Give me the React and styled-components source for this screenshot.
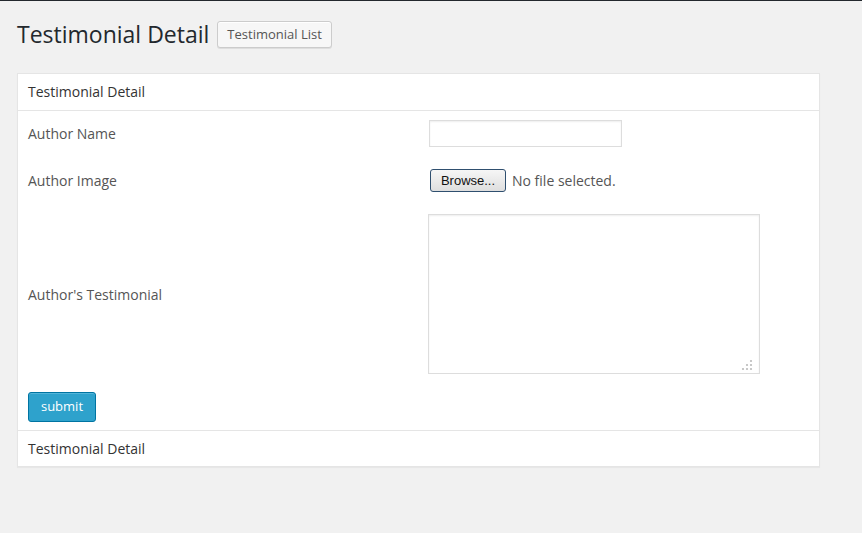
import React from "react";
import styled, { createGlobalStyle } from "styled-components";

const GlobalStyle = createGlobalStyle`
  body {
    margin: 0;
    background: #f1f1f1;
    border-top: 1px solid #23282d;
    font-family: "Open Sans", "Liberation Sans", sans-serif;
    color: #444;
  }
`;

const Page = styled.div`
  padding: 0 42px 60px 17px;
`;

const TitleBar = styled.div`
  display: flex;
  align-items: center;
  gap: 8px;
  padding-top: 19px;
  height: 28px;
`;

const Title = styled.h2`
  margin: 0;
  font-size: 23px;
  font-weight: 400;
  line-height: 29px;
  color: #23282d;
`;

const ListButton = styled.button`
  height: 27px;
  padding: 0 9px;
  font-family: "Open Sans", "Liberation Sans", sans-serif;
  font-size: 13px;
  color: #555;
  background: #f7f7f7;
  border: 1px solid #ccc;
  border-radius: 3px;
  box-shadow: inset 0 1px 0 #fff, 0 1px 0 rgba(0, 0, 0, 0.08);
`;

const Panel = styled.div`
  margin-top: 25px;
  background: #fff;
  border: 1px solid #e5e5e5;
  box-shadow: 0 1px 1px rgba(0, 0, 0, 0.04);
`;

const PanelBar = styled.div`
  box-sizing: border-box;
  height: ${(p) => (p.$bottom ? 36 : 37)}px;
  padding: 0 10px ${(p) => (p.$bottom ? 0 : 2)}px;
  display: flex;
  align-items: center;
  font-size: 14px;
  color: #333;
  border-${(p) => (p.$bottom ? "top" : "bottom")}: 1px solid #e5e5e5;
`;

const Body = styled.form`
  padding: 9px 10px 8px;
`;

const Row = styled.div`
  display: flex;
  align-items: center;
  margin-bottom: ${(p) => p.$gap}px;
`;

const Label = styled.label`
  width: 401px;
  flex-shrink: 0;
  font-size: 14px;
  color: #555;
`;

const TextInput = styled.input`
  box-sizing: border-box;
  width: 193px;
  height: 27px;
  border: 1px solid #ddd;
  box-shadow: inset 0 1px 2px rgba(0, 0, 0, 0.07);
  margin: 0;
`;

const FileField = styled.div`
  display: flex;
  align-items: center;
  gap: 6px;
  margin-left: 1px;
`;

const BrowseButton = styled.button`
  box-sizing: border-box;
  width: 76px;
  height: 23px;
  padding: 0;
  font-family: "Liberation Sans", Arial, sans-serif;
  font-size: 13px;
  color: #111;
  border: 1px solid #2f4f6f;
  border-radius: 3px;
  background: linear-gradient(#f6f6f6, #dedede);
`;

const FileNote = styled.span`
  font-size: 14px;
  color: #555;
  padding-bottom: 1px;
`;

const AreaWrap = styled.div`
  position: relative;
  width: 332px;
  height: 160px;
  margin-left: -1px;
`;

const Area = styled.textarea`
  box-sizing: border-box;
  width: 100%;
  height: 100%;
  margin: 0;
  border: 1px solid #ddd;
  box-shadow: inset 0 1px 2px rgba(0, 0, 0, 0.07);
  resize: none;
`;

const Grip = styled.svg`
  position: absolute;
  right: 7px;
  bottom: 3px;
`;

const SubmitButton = styled.button`
  box-sizing: border-box;
  width: 68px;
  height: 30px;
  padding: 0 0 2px;
  font-family: "Open Sans", "Liberation Sans", sans-serif;
  font-size: 13px;
  color: #fff;
  background: #2ea2cc;
  border: 1px solid #0074a2;
  border-radius: 3px;
  box-shadow: inset 0 1px 0 rgba(120, 200, 230, 0.5);
`;

export default function App() {
  return (
    <>
      <GlobalStyle />
      <Page>
        <TitleBar>
          <Title>Testimonial Detail</Title>
          <ListButton>Testimonial List</ListButton>
        </TitleBar>
        <Panel>
          <PanelBar>Testimonial Detail</PanelBar>
          <Body onSubmit={(e) => e.preventDefault()}>
            <Row $gap={22}>
              <Label>Author Name</Label>
              <TextInput type="text" />
            </Row>
            <Row $gap={22}>
              <Label>Author Image</Label>
              <FileField>
                <BrowseButton type="button">Browse...</BrowseButton>
                <FileNote>No file selected.</FileNote>
              </FileField>
            </Row>
            <Row $gap={18}>
              <Label>Author's Testimonial</Label>
              <AreaWrap>
                <Area />
                <Grip width="12" height="12" viewBox="0 0 12 12">
                  <g fill="#bbb">
                    <circle cx="10" cy="2" r="1.1" />
                    <circle cx="6" cy="6" r="1.1" />
                    <circle cx="10" cy="6" r="1.1" />
                    <circle cx="2" cy="10" r="1.1" />
                    <circle cx="6" cy="10" r="1.1" />
                    <circle cx="10" cy="10" r="1.1" />
                  </g>
                </Grip>
              </AreaWrap>
            </Row>
            <SubmitButton type="submit">submit</SubmitButton>
          </Body>
          <PanelBar $bottom>Testimonial Detail</PanelBar>
        </Panel>
      </Page>
    </>
  );
}
